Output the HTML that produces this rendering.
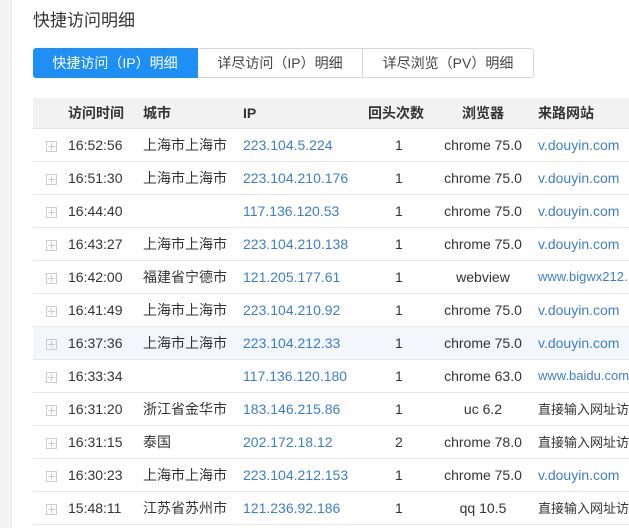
<!DOCTYPE html>
<html><head><meta charset="utf-8"><style>
*{margin:0;padding:0;box-sizing:border-box}
html,body{width:629px;height:528px;overflow:hidden}
body{background:#fff;font-family:"Liberation Sans","Noto Sans CJK SC",sans-serif;color:#333;font-size:14px;position:relative}
.strip{position:absolute;left:0;top:0;width:12px;height:528px;background:#f4f4f4;border-right:1px solid #e8e8e8}
h1{position:absolute;left:33px;top:6px;font-size:17px;font-weight:normal;color:#333}
.tabs{position:absolute;left:33px;top:48px;height:30px;display:flex;font-size:14px}
.tabs div{border:1px solid #d6d6d6;border-left:none;line-height:28px;text-align:center;color:#444}
.tabs div:first-child{background:#1e8ff5;border-color:#1e8ff5;color:#fff;border-radius:3px 0 0 3px}
.tabs div:last-child{border-radius:0 3px 3px 0}
table{position:absolute;left:33px;top:98px;border-collapse:collapse;width:620px;table-layout:fixed}
th{background:#f2f2f2;height:30px;text-align:left;font-weight:bold;font-size:14px;color:#333;border-bottom:1px solid #e4e4e4}
td{height:33px;border-bottom:1px solid #e6e6e6;white-space:nowrap;overflow:hidden;font-size:14px}
.c{text-align:center}
.n{padding-left:37px}
.s{padding-left:15px}
.b{color:#3d7fc7}
.p{display:inline-block;width:11px;height:11px;border:1px solid #ccc;position:relative;margin-left:13px;top:2px}
.p:before{content:"";position:absolute;left:1px;right:1px;top:4px;height:1px;background:#ccc}
.p:after{content:"";position:absolute;top:1px;bottom:1px;left:4px;width:1px;background:#ccc}
tr.h td{background:#f3f6fb}
</style></head><body>
<div class="strip"></div>
<h1>快捷访问明细</h1>
<div class="tabs"><div style="width:165px">快捷访问（IP）明细</div><div style="width:165px">详尽访问（IP）明细</div><div style="width:171px">详尽浏览（PV）明细</div></div>
<table>
<colgroup><col style="width:35px"><col style="width:75px"><col style="width:100px"><col style="width:115px"><col style="width:85px"><col style="width:80px"><col style="width:130px"></colgroup>
<tr><th></th><th>访问时间</th><th>城市</th><th>IP</th><th style="padding-left:10px">回头次数</th><th class="c">浏览器</th><th class="s">来路网站</th></tr>
<tr><td><span class="p"></span></td><td>16:52:56</td><td>上海市上海市</td><td class="b">223.104.5.224</td><td class="n">1</td><td class="c">chrome 75.0</td><td class="b s">v.douyin.com</td></tr>
<tr><td><span class="p"></span></td><td>16:51:30</td><td>上海市上海市</td><td class="b">223.104.210.176</td><td class="n">1</td><td class="c">chrome 75.0</td><td class="b s">v.douyin.com</td></tr>
<tr><td><span class="p"></span></td><td>16:44:40</td><td></td><td class="b">117.136.120.53</td><td class="n">1</td><td class="c">chrome 75.0</td><td class="b s">v.douyin.com</td></tr>
<tr><td><span class="p"></span></td><td>16:43:27</td><td>上海市上海市</td><td class="b">223.104.210.138</td><td class="n">1</td><td class="c">chrome 75.0</td><td class="b s">v.douyin.com</td></tr>
<tr><td><span class="p"></span></td><td>16:42:00</td><td>福建省宁德市</td><td class="b">121.205.177.61</td><td class="n">1</td><td class="c">webview</td><td class="b s" style="font-size:13px">www.bigwx212.</td></tr>
<tr><td><span class="p"></span></td><td>16:41:49</td><td>上海市上海市</td><td class="b">223.104.210.92</td><td class="n">1</td><td class="c">chrome 75.0</td><td class="b s">v.douyin.com</td></tr>
<tr class="h"><td><span class="p"></span></td><td>16:37:36</td><td>上海市上海市</td><td class="b">223.104.212.33</td><td class="n">1</td><td class="c">chrome 75.0</td><td class="b s">v.douyin.com</td></tr>
<tr><td><span class="p"></span></td><td>16:33:34</td><td></td><td class="b">117.136.120.180</td><td class="n">1</td><td class="c">chrome 63.0</td><td class="b s" style="font-size:13px">www.baidu.com</td></tr>
<tr><td><span class="p"></span></td><td>16:31:20</td><td>浙江省金华市</td><td class="b">183.146.215.86</td><td class="n">1</td><td class="c">uc 6.2</td><td class="s" style="font-size:13px">直接输入网址访问</td></tr>
<tr><td><span class="p"></span></td><td>16:31:15</td><td>泰国</td><td class="b">202.172.18.12</td><td class="n">2</td><td class="c">chrome 78.0</td><td class="s" style="font-size:13px">直接输入网址访问</td></tr>
<tr><td><span class="p"></span></td><td>16:30:23</td><td>上海市上海市</td><td class="b">223.104.212.153</td><td class="n">1</td><td class="c">chrome 75.0</td><td class="b s">v.douyin.com</td></tr>
<tr><td><span class="p"></span></td><td>15:48:11</td><td>江苏省苏州市</td><td class="b">121.236.92.186</td><td class="n">1</td><td class="c">qq 10.5</td><td class="s" style="font-size:13px">直接输入网址访问</td></tr>
</table>
</body></html>
